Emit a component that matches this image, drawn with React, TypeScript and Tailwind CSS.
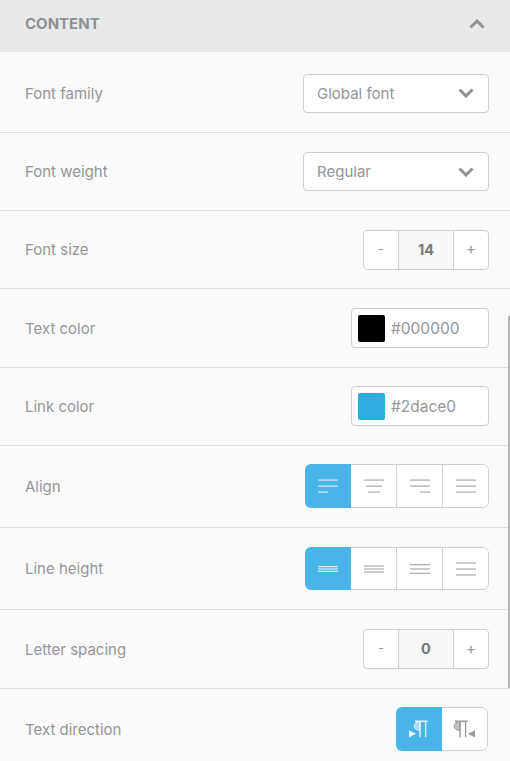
import { FC, ReactNode } from "react";

const Chevron: FC<{ up?: boolean }> = ({ up }) => (
  <svg width="16" height="10" viewBox="0 0 16 10" fill="none">
    <path
      d={up ? "M1.5 8.5 8 2l6.5 6.5" : "M1.5 1.5 8 8l6.5-6.5"}
      stroke="#8f9193"
      strokeWidth="3"
    />
  </svg>
);

const Lines: FC<{ rows: number[][]; active?: boolean }> = ({ rows, active }) => (
  <svg width="20" height="20" viewBox="0 0 20 20">
    {rows.map(([x1, x2, y], i) => (
      <rect
        key={i}
        x={x1}
        y={y}
        width={x2 - x1}
        height="1.2"
        fill={active ? "#d6f0fc" : "#ababab"}
      />
    ))}
  </svg>
);

const Pilcrow: FC<{ rtl?: boolean; active?: boolean }> = ({ rtl, active }) => {
  const c = active ? "#e2f4fd" : "#9a9a9a";
  return (
    <svg width="24" height="20" viewBox="0 0 24 20" fill="none">
      <g transform={rtl ? "translate(0 0)" : "translate(6 0)"}>
        <path d="M2 2.2h12.5M7 2.2v16M12.6 2.2v16" stroke={c} strokeWidth="1.4" />
        <path
          d="M7 2.6C3.4 2.6 1.2 4.6 1.2 7.1S3.4 11.5 7 11.5z"
          fill={c}
          fillOpacity="0.6"
          stroke={c}
          strokeWidth="1"
        />
      </g>
      {rtl ? (
        <path d="M22 11.2v7.2l-7-3.6z" fill={c} />
      ) : (
        <path d="M2 11.2v7.2l7-3.6z" fill={c} />
      )}
    </svg>
  );
};

const Select: FC<{ value: string }> = ({ value }) => (
  <div className="flex h-[39px] w-[186px] items-center justify-between rounded border border-[#cfcfcf] bg-white pl-[13px] pr-[6px] text-[15px] text-[#939699]">
    <span className="pt-[2px]">{value}</span>
    <span className="mr-[8px] flex"><Chevron /></span>
  </div>
);

const Stepper: FC<{ value: string }> = ({ value }) => (
  <div className="flex h-[40px] w-[126px] rounded border border-[#cfcfcf] bg-white text-[13px] text-[#9a9c9e]">
    <div className="flex w-[34px] items-center justify-center">-</div>
    <div className="flex w-[56px] items-center justify-center border-x border-[#cfcfcf] bg-[#f8f8f8] text-[14.5px] font-bold text-[#77797b]">
      {value}
    </div>
    <div className="flex flex-1 items-center justify-center text-[15px]">+</div>
  </div>
);

const ColorInput: FC<{ swatch: string; value: string }> = ({ swatch, value }) => (
  <div className="flex h-[40px] w-[138px] items-center gap-[6px] rounded border border-[#cfcfcf] bg-white pl-[6px] text-[15.5px] text-[#939699]">
    <div className={`h-[27px] w-[27px] rounded-[2px] ${swatch}`} />
    <span className="pt-[1px]">{value}</span>
  </div>
);

const Segmented: FC<{ items: ReactNode[]; height: string }> = ({ items, height }) => (
  <div className={`flex ${height} overflow-hidden rounded-md`}>
    {items.map((item, i) => (
      <div
        key={i}
        className={`flex items-center justify-center ${
          i === 0
            ? "w-[46px] bg-[#4ab3e8]"
            : "w-[46px] border-y border-r border-[#cfcfcf] bg-white last:rounded-r-md"
        }`}
      >
        {item}
      </div>
    ))}
  </div>
);

const Row: FC<{ label: string; className: string; children: ReactNode }> = ({ label, className, children }) => (
  <div className={`flex items-center justify-between border-b border-[#dedede] pl-[25px] pr-[21px] ${className}`}>
    <span className="pt-[2px] text-[15px] text-[#939699]">{label}</span>
    {children}
  </div>
);

export default function App() {
  return (
    <div className="relative h-[761px] w-full overflow-hidden bg-[#fafafa] font-['Inter',sans-serif]">
      <div className="flex h-[52px] items-center justify-between bg-[#e9e9e9] pb-[3px] pl-[25px] pr-[25px]">
        <span className="text-[15px] font-bold text-[#8e9194]">CONTENT</span>
        <span className="mb-[1px] flex"><Chevron up /></span>
      </div>

      <Row label="Font family" className="h-[81px] pt-[2px]">
        <Select value="Global font" />
      </Row>
      <Row label="Font weight" className="h-[78px]">
        <Select value="Regular" />
      </Row>
      <Row label="Font size" className="h-[78px]">
        <Stepper value="14" />
      </Row>
      <Row label="Text color" className="h-[79px]">
        <ColorInput swatch="bg-black" value="#000000" />
      </Row>
      <Row label="Link color" className="h-[78px] pb-[1px]">
        <ColorInput swatch="bg-[#2dace0]" value="#2dace0" />
      </Row>
      <Row label="Align" className="h-[82px] pb-[1px]">
        <Segmented
          height="h-[44px]"
          items={[
            <Lines active rows={[[0, 20, 3.5], [0, 20, 9.5], [0, 10, 15.5]]} />,
            <Lines rows={[[0, 20, 3.5], [2, 18, 9.5], [4, 16, 15.5]]} />,
            <Lines rows={[[0, 20, 3.5], [0, 20, 9.5], [10, 20, 15.5]]} />,
            <Lines rows={[[0, 20, 3.5], [0, 20, 9.5], [0, 20, 15.5]]} />,
          ]}
        />
      </Row>
      <Row label="Line height" className="h-[82px]">
        <Segmented
          height="h-[43px]"
          items={[
            <Lines active rows={[[0, 20, 7], [0, 20, 9.4], [0, 20, 11.8]]} />,
            <Lines rows={[[0, 20, 6.4], [0, 20, 9.4], [0, 20, 12.4]]} />,
            <Lines rows={[[0, 20, 5], [0, 20, 9.4], [0, 20, 13.8]]} />,
            <Lines rows={[[0, 20, 3.4], [0, 20, 9.4], [0, 20, 15.4]]} />,
          ]}
        />
      </Row>
      <Row label="Letter spacing" className="h-[79px]">
        <Stepper value="0" />
      </Row>
      <Row label="Text direction" className="h-[80px] border-b-0">
        <div className="mr-[1px]">
          <Segmented height="h-[44px]" items={[<Pilcrow active />, <Pilcrow rtl />]} />
        </div>
      </Row>

      <div className="absolute right-0 top-[316px] h-[372px] w-[2px] bg-[#b5b5b5]" />
    </div>
  );
}
